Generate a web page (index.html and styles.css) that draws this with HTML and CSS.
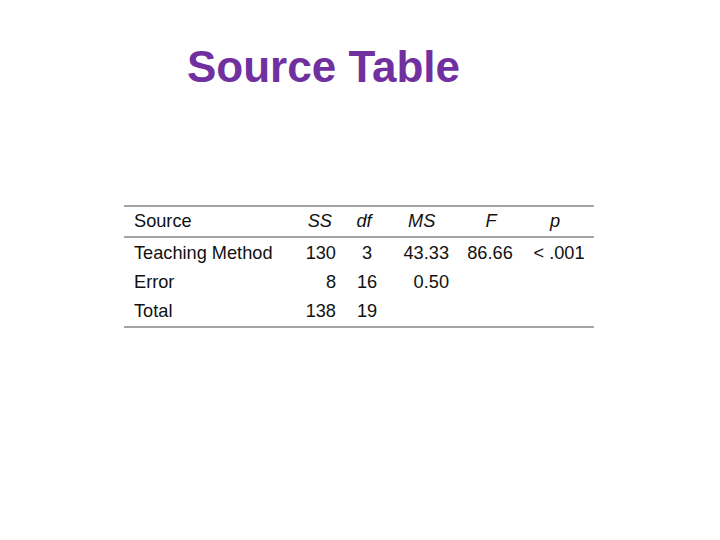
FILE: index.html
```html
<!DOCTYPE html>
<html>
<head>
<meta charset="utf-8">
<link rel="stylesheet" href="styles.css">
</head>
<body>
<h1 class="title">Source Table</h1>
<div class="table">
  <div class="row head">
    <div class="c c1">Source</div>
    <div class="c c2 h2"><i>SS</i></div>
    <div class="c c3 h3"><i>df</i></div>
    <div class="c c4 h4"><i>MS</i></div>
    <div class="c c5 h5"><i>F</i></div>
    <div class="c c6 h6"><i>p</i></div>
  </div>
  <div class="body">
    <div class="row">
      <div class="c c1">Teaching Method</div>
      <div class="c c2">130</div>
      <div class="c c3">3</div>
      <div class="c c4">43.33</div>
      <div class="c c5">86.66</div>
      <div class="c c6">&lt; .001</div>
    </div>
    <div class="row">
      <div class="c c1">Error</div>
      <div class="c c2">8</div>
      <div class="c c3">16</div>
      <div class="c c4">0.50</div>
      <div class="c c5"></div>
      <div class="c c6"></div>
    </div>
    <div class="row">
      <div class="c c1">Total</div>
      <div class="c c2">138</div>
      <div class="c c3">19</div>
      <div class="c c4"></div>
      <div class="c c5"></div>
      <div class="c c6"></div>
    </div>
  </div>
</div>
</body>
</html>
```
FILE: styles.css
```css
html, body {
  margin: 0;
  padding: 0;
  background: #ffffff;
}
body {
  width: 720px;
  height: 540px;
  font-family: "Liberation Sans", Arial, sans-serif;
  color: #111111;
}
.title {
  margin: 42px 0 0 187px;
  font-size: 44px;
  line-height: 50px;
  font-weight: bold;
  color: #7030a0;
}
.table {
  margin: 113px 0 0 124px;
  width: 470px;
  border-top: 2px solid #a4a4a4;
  border-bottom: 2px solid #a4a4a4;
  font-size: 18.2px;
}
.row {
  display: grid;
  grid-template-columns: 176px 40px 54px 66px 60px 74px;
}
.head {
  line-height: 29px;
  border-bottom: 2px solid #a4a4a4;
}
.body {
  padding-top: 1px;
}
.body .row {
  line-height: 29px;
}
.c {
  white-space: nowrap;
}
.c1 {
  padding-left: 10px;
}
.c2 {
  text-align: right;
  padding-right: 4px;
}
.c3 {
  text-align: center;
}
.c4 {
  text-align: right;
  padding-right: 11px;
}
.c5 {
  text-align: center;
}
.c6 {
  text-align: center;
  padding-left: 4px;
}
.h2 {
  padding-right: 8px;
}
.h3 {
  padding-right: 6px;
}
.h4 {
  text-align: left;
  padding-left: 14px;
  padding-right: 0;
}
.h5 {
  padding-left: 2px;
}
.h6 {
  padding-left: 0;
  padding-right: 4px;
}
```
